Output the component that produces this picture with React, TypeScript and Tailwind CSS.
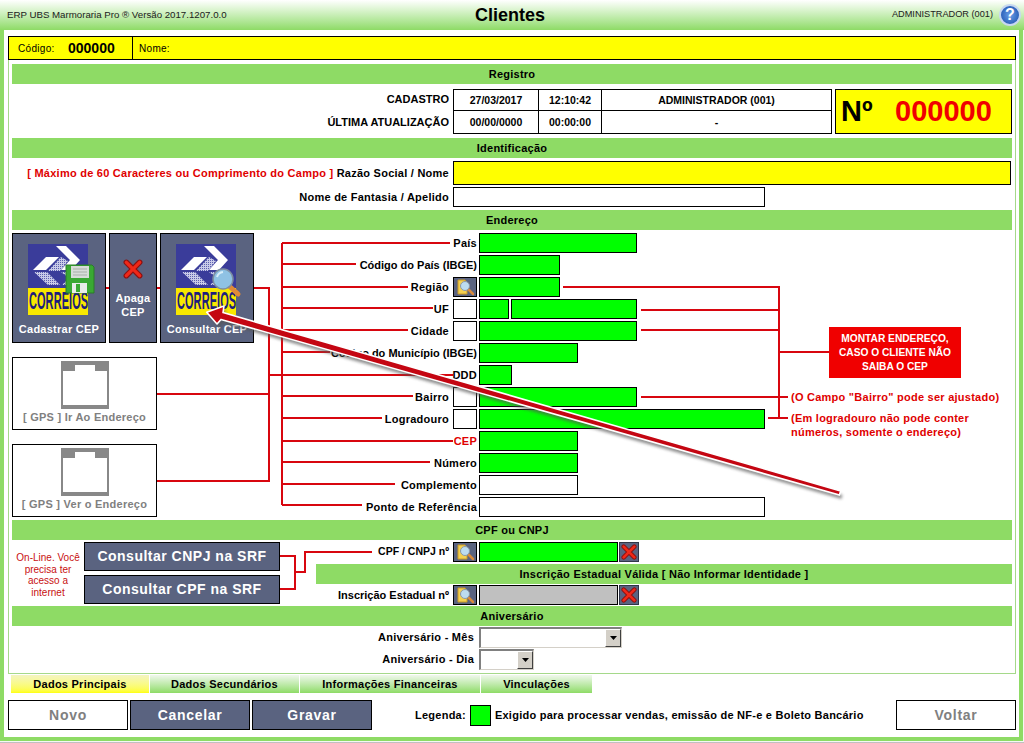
import React from 'react';

const SLATE = 'bg-[#5a6380]';
const LABEL = 'text-[11px] tracking-[0.25px] font-bold';

function CorreiosLogo({ badge }: { badge: 'floppy' | 'lens' }) {
  const id = 'hatch-' + badge;
  return (
    <svg width="68" height="72" viewBox="0 0 68 72" className="block">
      <defs>
        <pattern id={id} width="2" height="2" patternUnits="userSpaceOnUse">
          <rect width="2" height="2" fill="#c9cbe8" />
          <rect width="1" height="1" fill="#5c5fb0" />
        </pattern>
      </defs>
      <rect x="0" y="0" width="60" height="44" fill="#3a3c9a" />
      <rect x="0" y="44" width="60" height="27" fill="#f8e800" />
      <path d="M28 2 L38 2 L52 16 L43 26 L33 26 L42 16 Z" fill="#fff" />
      <path d="M5 26 L18 13 L31 13 L18 26 Z" fill="#fff" />
      <path d="M33 13 L40 17 L32 27 L20 27 Z" fill={`url(#${id})`} />
      <path d="M6 28 L19 28 L32 41 L20 41 Z" fill={`url(#${id})`} />
      <path d="M33 28 L43 28 L52 36 L46 41 L34 41 L41 34 Z" fill={`url(#${id})`} />
      <text
        transform="translate(1 65) scale(0.52 1.1)"
        fontFamily="'Liberation Sans', sans-serif"
        fontWeight="700"
        fontSize="21"
        fill="#1d1d7c"
      >
        CORREIOS
      </text>
      {badge === 'floppy' ? (
        <g>
          <path d="M38 21 H64 L66 23 V49 H38 Z" fill="#39a832" stroke="#2a7d28" />
          <rect x="43" y="22" width="18" height="12" fill="#d8dcd8" />
          <path d="M45 25 H59 M45 28 H59 M45 31 H59" stroke="#a8b0a8" />
          <rect x="44" y="39" width="15" height="10" fill="#e8ece8" />
          <rect x="48" y="40" width="4" height="8" fill="#39a832" />
        </g>
      ) : (
        <g>
          <path d="M52 41 L62 50" stroke="#e08a38" strokeWidth="5" strokeLinecap="round" />
          <circle cx="47" cy="35" r="10" fill="#8fc2e4" stroke="#7d8da0" strokeWidth="1.5" />
          <path d="M41 33 A7 7 0 0 1 47 28" stroke="#d8eefa" strokeWidth="2" fill="none" />
        </g>
      )}
    </svg>
  );
}

function XGlyph({ size }: { size: number }) {
  return (
    <svg width={size} height={size} viewBox="0 0 18 18" className="block">
      <path d="M3 3 L15 15 M15 3 L3 15" stroke="#8c1010" strokeWidth="5" strokeLinecap="round" />
      <path d="M3 3 L15 15 M15 3 L3 15" stroke="#f02818" strokeWidth="3" strokeLinecap="round" />
    </svg>
  );
}

function SearchBox() {
  return (
    <div className={`w-[24px] h-[20px] ${SLATE} border border-black flex items-center justify-center`}>
      <svg width="20" height="18" viewBox="0 0 20 18" className="block">
        <path d="M3 2 H10 L12 5 V16 H3 Z" fill="#f4d050" stroke="#c89a28" />
        <path d="M13 11 L18 16" stroke="#d88a3c" strokeWidth="2.5" strokeLinecap="round" />
        <circle cx="10" cy="8" r="4.5" fill="#bcdcf0" stroke="#8a98a8" />
      </svg>
    </div>
  );
}

function XBox() {
  return (
    <div className={`w-[20px] h-[20px] ${SLATE} border border-[#303648] flex items-center justify-center`}>
      <XGlyph size={16} />
    </div>
  );
}

function GpsIcon() {
  return (
    <svg width="48" height="48" viewBox="0 0 48 48" className="block">
      <path d="M0 0 H48 V48 H0 Z" fill="#888" />
      <path d="M2 10 H14 V4 H34 V10 H46 V44 H2 Z" fill="#fff" />
      <rect x="14" y="0" width="20" height="4" fill="#888" />
    </svg>
  );
}

function SectionBar({ title }: { title: string }) {
  return <div className={`h-5 bg-[#8edb65] flex items-center justify-center text-black ${LABEL}`}>{title}</div>;
}

function DropDown({ width }: { width: string }) {
  return (
    <div className={`${width} h-[21px] bg-white flex border-t-2 border-l-2 border-t-[#808080] border-l-[#808080] border-r border-b border-r-[#d4d0c8] border-b-[#d4d0c8]`}>
      <div className="flex-1" />
      <div className="w-[16px] bg-[#d4d0c8] border-t border-l border-white border-r border-b border-r-[#404040] border-b-[#404040] flex items-center justify-center">
        <svg width="7" height="4" viewBox="0 0 7 4" className="block">
          <path d="M0 0 H7 L3.5 4 Z" fill="#000" />
        </svg>
      </div>
    </div>
  );
}

type Field = { w: string; bg: string };
type AddressRow = { label: string; red?: boolean; tight?: boolean; box?: 'search' | 'blank'; fields: Field[] };

const GREEN = 'bg-[#00ff00]';

const addressRows: AddressRow[] = [
  { label: 'País', fields: [{ w: 'w-[158px]', bg: GREEN }] },
  { label: 'Código do País (IBGE)', tight: true, fields: [{ w: 'w-[81px]', bg: GREEN }] },
  { label: 'Região', box: 'search', fields: [{ w: 'w-[81px]', bg: GREEN }] },
  { label: 'UF', box: 'blank', fields: [{ w: 'w-[30px]', bg: GREEN }, { w: 'w-[126px]', bg: GREEN }] },
  { label: 'Cidade', box: 'blank', fields: [{ w: 'w-[158px]', bg: GREEN }] },
  { label: 'Código do Município (IBGE)', tight: true, fields: [{ w: 'w-[99px]', bg: GREEN }] },
  { label: 'DDD', fields: [{ w: 'w-[33px]', bg: GREEN }] },
  { label: 'Bairro', box: 'blank', fields: [{ w: 'w-[158px]', bg: GREEN }] },
  { label: 'Logradouro', box: 'blank', fields: [{ w: 'w-[286px]', bg: GREEN }] },
  { label: 'CEP', red: true, fields: [{ w: 'w-[99px]', bg: GREEN }] },
  { label: 'Número', fields: [{ w: 'w-[99px]', bg: GREEN }] },
  { label: 'Complemento', fields: [{ w: 'w-[99px]', bg: 'bg-white' }] },
  { label: 'Ponto de Referência', fields: [{ w: 'w-[286px]', bg: 'bg-white' }] },
];

function Connectors() {
  return (
    <svg width="1024" height="743" viewBox="0 0 1024 743" className="absolute left-0 top-0 pointer-events-none">
      <g stroke="#d8060f" strokeWidth="2" fill="none">
        <path d="M282 243 V505" />
        <path d="M282 243 H450 M282 264 H356 M282 287 H408 M282 308 H433 M282 330 H408 M282 352 H330 M268 375 H453 M282 396 H413 M282 418 H382 M282 441 H453 M282 462 H430 M282 484 H395 M282 505 H362" />
        <path d="M254 288 H269 V481 H157 M157 394 H268 M106 288 H109 M157 288 H160" />
        <path d="M779 287 V418 M563 287 H780 M641 310 H779 M641 330 H779 M779 352 H829 M641 397 H788 M768 418 H788" />
        <path d="M280 556 H295 V589 H280 M295 572 H305 V552 H372" />
      </g>
    </svg>
  );
}

function BigArrow() {
  const d = 'M206.7 312.3 L224 306 L223 312.6 L840.6 490.9 L839.4 495.1 L221 319.4 L217 324 Z';
  return (
    <svg width="1024" height="743" viewBox="0 0 1024 743" className="absolute left-0 top-0 pointer-events-none">
      <defs>
        <filter id="arrow-shadow" x="-5%" y="-10%" width="110%" height="120%">
          <feGaussianBlur stdDeviation="1.6" />
        </filter>
      </defs>
      <path d={d} transform="translate(2 4)" fill="#555" opacity="0.65" filter="url(#arrow-shadow)" />
      <path d={d} fill="#c40612" stroke="#fff" strokeWidth="1.6" strokeLinejoin="round" />
    </svg>
  );
}

function ActionButton({ label, active, className }: { label: string; active?: boolean; className?: string }) {
  return (
    <div
      className={`w-[120px] h-[30px] border border-black flex items-center justify-center text-[14px] font-bold tracking-[0.7px] ${
        active ? `${SLATE} text-white` : 'bg-white text-[#808080]'
      } ${className ?? ''}`}
    >
      {label}
    </div>
  );
}

export default function App() {
  return (
    <div className="relative w-[1024px] h-[743px] overflow-hidden bg-[#f4f7f4] font-['Liberation_Sans',Arial,sans-serif] text-black">
      {/* topo */}
      <div className="h-[30px] bg-linear-to-b from-white to-[#8edb65] relative flex items-center justify-between pl-[7px] pr-[3px]">
        <span className="text-[9.7px] text-[#202020]">ERP UBS Marmoraria Pro ® Versão 2017.1207.0.0</span>
        <span className="absolute left-[475px] top-[4px] text-[18px] leading-[22px] font-bold">Clientes</span>
        <div className="flex items-center gap-[6px]">
          <span className="text-[9.2px] text-[#202020]">ADMINISTRADOR (001)</span>
          <div className="w-[22px] h-[22px] rounded-full bg-radial from-[#6aa0e8] to-[#1448a8] border-2 border-[#c8d8f0] flex items-center justify-center text-white text-[16px] font-bold leading-none">
            ?
          </div>
        </div>
      </div>

      <div className="w-[1023px] h-[711px] bg-white border-x-[4px] border-b-[4px] border-[#8edb65] pl-[4px] pr-[3px] pt-[6px]">
        {/* barra codigo */}
        <div className="h-[24px] bg-[#ffff00] border border-black flex items-center text-[10px]">
          <div className="w-[124px] h-full border-r border-black flex items-center pl-[9px]">
            <span className="w-[50px] tracking-[0.3px]">Código:</span>
            <span className="text-[14px] font-bold">000000</span>
          </div>
          <span className="pl-[6px] tracking-[0.3px]">Nome:</span>
        </div>

        <div className="h-[614px] border-x border-b border-[#a5d98a] px-[3px] pt-[4px]">
          <SectionBar title="Registro" />
          {/* registro */}
          <div className="flex mt-[5px] mb-[4px] h-[45px]">
            <div className="w-[437px] flex flex-col text-right text-[11px] font-bold">
              <div className="h-[22px] leading-[21px]">CADASTRO</div>
              <div className="h-[23px] leading-[22px]">ÚLTIMA ATUALIZAÇÃO</div>
            </div>
            <div className="ml-[4px] w-[379px] border border-black grid grid-cols-[84px_63px_230px] grid-rows-[21px_22px] text-[10.5px] font-bold text-center">
              <div className="border-b border-black leading-[21px]">27/03/2017</div>
              <div className="border-b border-l border-black leading-[21px]">12:10:42</div>
              <div className="border-b border-l border-black leading-[21px]">ADMINISTRADOR (001)</div>
              <div className="leading-[22px]">00/00/0000</div>
              <div className="border-l border-black leading-[22px]">00:00:00</div>
              <div className="border-l border-black leading-[22px]">-</div>
            </div>
            <div className="ml-[3px] w-[177px] bg-[#ffff00] border border-black flex items-center pl-[5px] font-bold text-[29px] leading-none">
              <span className="w-[54px]">Nº</span>
              <span className="text-[#f00000]">000000</span>
            </div>
          </div>

          <SectionBar title="Identificação" />
          {/* identificacao */}
          <div className={`flex items-center mt-[3px] h-[24px] ${LABEL}`}>
            <div className="w-[437px] text-right whitespace-nowrap">
              <span className="text-[#e00000]">[ Máximo de 60 Caracteres ou Comprimento do Campo ]</span> Razão Social / Nome
            </div>
            <div className="ml-[4px] w-[558px] h-full bg-[#ffff00] border border-black" />
          </div>
          <div className={`flex items-center mt-[2px] mb-[3px] h-[20px] ${LABEL}`}>
            <div className="w-[437px] text-right">Nome de Fantasia / Apelido</div>
            <div className="ml-[4px] w-[312px] h-full bg-white border border-black" />
          </div>

          <SectionBar title="Endereço" />
          {/* endereco */}
          <div className="flex mt-[3px] mb-[3px] h-[284px]">
            <div className="w-[242px] flex flex-col">
              <div className="flex gap-[3px] h-[110px]">
                <div className={`relative w-[94px] ${SLATE} border border-black text-white flex flex-col items-center ${LABEL}`}>
                  <div className="self-start ml-[15px] mt-[10px]">
                    <CorreiosLogo badge="floppy" />
                  </div>
                  <span className="absolute bottom-[5px] left-0 right-0 text-center whitespace-nowrap">Cadastrar CEP</span>
                </div>
                <div className={`w-[48px] ${SLATE} border border-black text-white leading-[14px] flex flex-col items-center ${LABEL}`}>
                  <div className="mt-[25px] mb-[12px]">
                    <XGlyph size={20} />
                  </div>
                  <span>Apaga</span>
                  <span>CEP</span>
                </div>
                <div className={`relative w-[94px] ${SLATE} border border-black text-white flex flex-col items-center ${LABEL}`}>
                  <div className="self-start ml-[15px] mt-[10px]">
                    <CorreiosLogo badge="lens" />
                  </div>
                  <span className="absolute bottom-[5px] left-0 right-0 text-center whitespace-nowrap">Consultar CEP</span>
                </div>
              </div>
              <div className={`mt-[14px] w-[145px] h-[73px] bg-white border border-black flex flex-col items-center pt-[3px] text-[#808080] ${LABEL}`}>
                <GpsIcon />
                <span className="whitespace-nowrap">[ GPS ] Ir Ao Endereço</span>
              </div>
              <div className={`mt-[14px] w-[145px] h-[73px] bg-white border border-black flex flex-col items-center pt-[3px] text-[#808080] ${LABEL}`}>
                <GpsIcon />
                <span className="whitespace-nowrap">[ GPS ] Ver o Endereço</span>
              </div>
            </div>

            <div className="w-[511px] flex flex-col gap-[2px]">
              {addressRows.map(row => (
                <div key={row.label} className="flex h-5 items-center">
                  <div className={`w-[225px] flex items-center justify-end pr-[2px] gap-[4px] ${LABEL}`}>
                    <span className={`whitespace-nowrap ${row.red ? 'text-[#e00000]' : ''} ${row.tight ? 'tracking-normal' : ''}`}>{row.label}</span>
                    {row.box === 'search' && <SearchBox />}
                    {row.box === 'blank' && <div className="w-[24px] h-[20px] bg-white border border-black" />}
                  </div>
                  <div className="flex gap-[2px] h-full">
                    {row.fields.map((f, i) => (
                      <div key={i} className={`${f.w} h-full ${f.bg} border border-black`} />
                    ))}
                  </div>
                </div>
              ))}
            </div>

            {/* observacoes */}
            <div className={`ml-[26px] flex-1 flex flex-col leading-[14px] text-[#e00000] ${LABEL}`}>
              <div className="mt-[94px] ml-[38px] w-[132px] h-[51px] bg-[#f00000] text-white text-[10.2px] tracking-normal text-center flex items-center justify-center">
                MONTAR ENDEREÇO,
                <br />
                CASO O CLIENTE NÃO
                <br />
                SAIBA O CEP
              </div>
              <div className="mt-[12px] whitespace-nowrap">(O Campo "Bairro" pode ser ajustado)</div>
              <div className="mt-[7px] whitespace-nowrap">
                (Em logradouro não pode conter
                <br />
                números, somente o endereço)
              </div>
            </div>
          </div>

          <SectionBar title="CPF ou CNPJ" />
          {/* cpf cnpj */}
          <div className="flex h-[66px]">
            <div className="w-[72px] pt-[4px] flex items-center justify-center text-center text-[10px] leading-[11.5px] text-[#c81010]">
              <span>
                On-Line. Você
                <br />
                precisa ter
                <br />
                acesso a
                <br />
                internet
              </span>
            </div>
            <div className="w-[196px] pt-[2px] flex flex-col gap-[4px] text-white text-[14px] font-bold tracking-[0.5px]">
              <div className={`h-[29px] ${SLATE} border border-black flex items-center justify-center`}>Consultar CNPJ na SRF</div>
              <div className={`h-[29px] ${SLATE} border border-black flex items-center justify-center`}>Consultar CPF na SRF</div>
            </div>
            <div className={`ml-[36px] flex-1 pt-[2px] flex flex-col ${LABEL}`}>
              <div className="flex items-center h-5">
                <span className="w-[133px] text-right text-[10.5px] tracking-normal">CPF / CNPJ nº</span>
                <div className="ml-[4px]">
                  <SearchBox />
                </div>
                <div className="ml-[2px] w-[139px] h-full bg-[#00ff00] border border-black" />
                <div className="ml-[1px]">
                  <XBox />
                </div>
              </div>
              <div className="mt-[2px]">
                <SectionBar title="Inscrição Estadual Válida [ Não Informar Identidade ]" />
              </div>
              <div className="flex items-center h-5 mt-[1px]">
                <span className="w-[133px] text-right whitespace-nowrap tracking-normal">Inscrição Estadual nº</span>
                <div className="ml-[4px]">
                  <SearchBox />
                </div>
                <div className="ml-[2px] w-[139px] h-full bg-[#c0c0c0] border border-black" />
                <div className="ml-[1px]">
                  <XBox />
                </div>
              </div>
            </div>
          </div>

          <SectionBar title="Aniversário" />
          {/* aniversario */}
          <div className={`flex items-center mt-[1px] h-[21px] ${LABEL}`}>
            <span className="w-[462px] text-right">Aniversário - Mês</span>
            <div className="ml-[5px]">
              <DropDown width="w-[143px]" />
            </div>
          </div>
          <div className={`flex items-center mt-[1px] h-[21px] ${LABEL}`}>
            <span className="w-[462px] text-right">Aniversário - Dia</span>
            <div className="ml-[5px]">
              <DropDown width="w-[55px]" />
            </div>
          </div>
        </div>

        {/* abas */}
        <div className={`flex gap-[1px] mt-[1px] pl-[3px] h-[18px] ${LABEL}`}>
          <div className="w-[138px] bg-linear-to-b from-[#f4f4c0] to-[#ffff00] flex items-center justify-center">Dados Principais</div>
          <div className="w-[149px] bg-linear-to-b from-[#f0f8ec] to-[#8edb65] flex items-center justify-center">Dados Secundários</div>
          <div className="w-[180px] bg-linear-to-b from-[#f0f8ec] to-[#8edb65] flex items-center justify-center">Informações Financeiras</div>
          <div className="w-[111px] bg-linear-to-b from-[#f0f8ec] to-[#8edb65] flex items-center justify-center">Vinculações</div>
        </div>

        {/* botoes */}
        <div className="flex items-center mt-[7px] h-[30px]">
          <ActionButton label="Novo" />
          <ActionButton label="Cancelar" active className="ml-[2px]" />
          <ActionButton label="Gravar" active className="ml-[2px]" />
          <span className={`ml-[43px] ${LABEL}`}>Legenda:</span>
          <div className="ml-[4px] w-[21px] h-[21px] bg-[#00ff00] border border-black" />
          <span className={`ml-[4px] whitespace-nowrap ${LABEL}`}>Exigido para processar vendas, emissão de NF-e e Boleto Bancário</span>
          <ActionButton label="Voltar" className="ml-auto" />
        </div>
      </div>
      <div className="h-px mt-px bg-[#c0c0c0]" />

      <Connectors />
      <BigArrow />
    </div>
  );
}
